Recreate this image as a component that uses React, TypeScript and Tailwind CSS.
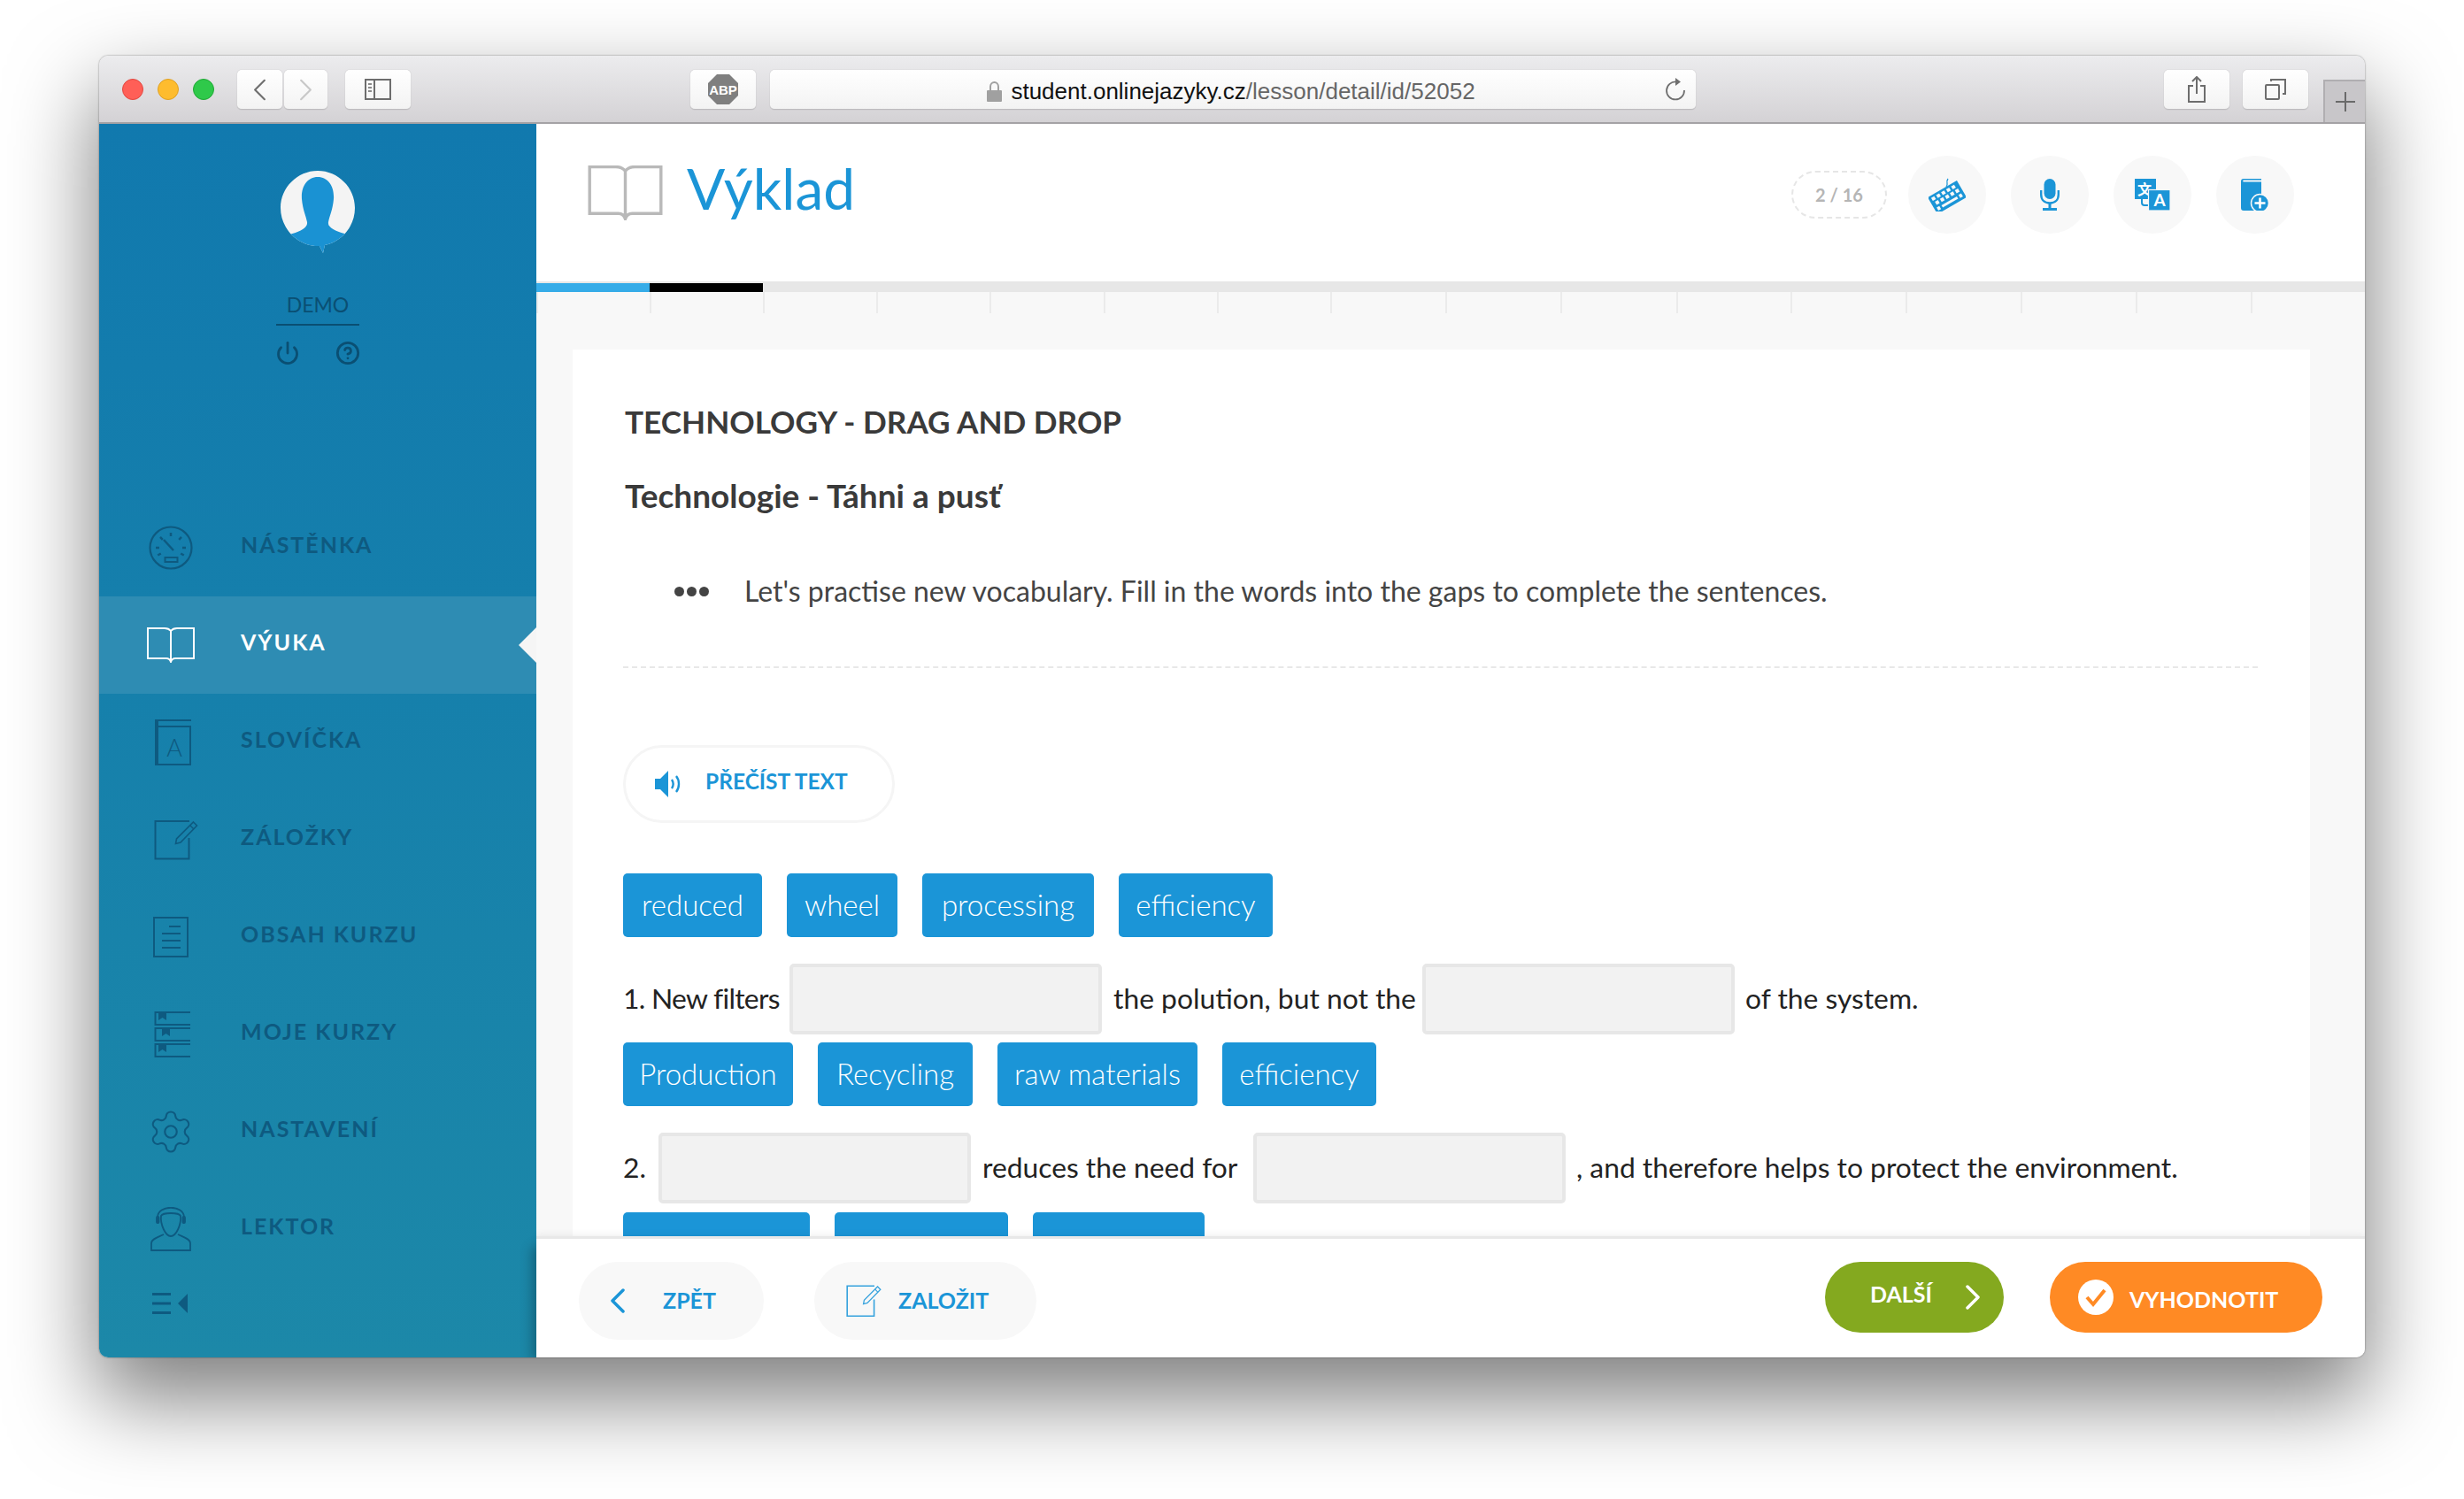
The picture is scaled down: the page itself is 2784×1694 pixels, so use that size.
import React from "react";
import { Settings, Power, CircleHelp } from "lucide-react";

const DK = "#0e5a80";
const BL = "#1b95d7";

function OpenBook({ w, h, color, sw }: { w: number; h: number; color: string; sw: number }) {
  return (
    <svg width={w} height={h} viewBox="0 0 54 40" fill="none" stroke={color} strokeWidth={sw}>
      <path d="M27 4C25 1.500 22 1 20 1H1V35H22C24 35 26 36 27 39C28 36 30 35 32 35H53V1H34C32 1 29 1.500 27 4ZM27 4V37" />
    </svg>
  );
}
function Gauge() {
  const ticks = [-120, -90, -45, 0, 45, 90, 120];
  return (
    <svg width="50" height="50" viewBox="0 0 50 50" fill="none" stroke={DK}>
      <circle cx="25" cy="25" r="23.500" strokeWidth="2.200" />
      {ticks.map((a) => (
        <line key={a} x1="25" y1="8" x2="25" y2="12" strokeWidth="2.500" transform={`rotate(${a} 25 25)`} />
      ))}
      <path d="M17 16L28 28" strokeWidth="2.500" />
      <rect x="18.500" y="36" width="14" height="5" strokeWidth="2" />
    </svg>
  );
}
function ABook() {
  return (
    <svg className="ml-[6px]" width="42" height="52" viewBox="0 0 42 52" fill="none" stroke={DK}>
      <path d="M41 1H1V51H40V8H3" strokeWidth="2" />
      <path d="M2 1V51" strokeWidth="4" />
      <text x="22" y="42" fill={DK} stroke="none" textAnchor="middle" fontSize="27" fontFamily="Lato, sans-serif" fontWeight="300">A</text>
    </svg>
  );
}
function Note({ w = 50, h = 46, color = DK, sw = 2, className = "" }: { w?: number; h?: number; color?: string; sw?: number; className?: string }) {
  return (
    <svg className={className} width={w} height={h} viewBox="0 0 50 46" fill="none" stroke={color} strokeWidth={sw}>
      <path d="M40 2H1.500V44.500H39.500V21" />
      <path d="M44.500 3L48.500 7L30 26L24.500 27.500L25.500 22Z" strokeWidth={sw * 0.8} />
      <path d="M41 7L45 11" strokeWidth={sw * 0.7} />
    </svg>
  );
}
function Doc() {
  return (
    <svg width="40" height="46" viewBox="0 0 40 46" fill="none" stroke={DK} strokeWidth="2">
      <rect x="1" y="1" width="38" height="44" />
      <path d="M18 11H31M10 19H31M10 27H31M10 35H31" />
    </svg>
  );
}
function Shelves() {
  const shelf = (y: number, bx: number) => (
    <g key={y}>
      <path d={`M41 ${y + 1}H1.500V${y + 15}H41`} strokeWidth="2" fill="none" stroke={DK} />
      <path d={`M${bx} ${y + 1}H${bx + 9}V${y + 10}L${bx + 4.500} ${y + 7}L${bx} ${y + 10}Z`} fill={DK} stroke="none" />
    </g>
  );
  return (
    <svg className="ml-[2px]" width="41" height="52" viewBox="0 0 41 52">
      {shelf(0, 5)}
      {shelf(18, 9)}
      {shelf(36, 5)}
    </svg>
  );
}
function Lektor() {
  return (
    <svg width="46" height="50" viewBox="0 0 46 50" fill="none" stroke={DK} strokeWidth="1.800">
      <path d="M15 31C9 34 1 36 1 41V49H45V41C45 36 37 34 31 31" />
      <path d="M12 10C14 6 32 6 34 10C35 20 29 33 23 33C17 33 11 20 12 10Z" />
      <path d="M8 12C8 -3 38 -3 38 12" />
      <rect x="7" y="11" width="2.500" height="7" rx="1" fill={DK} />
      <rect x="36.500" y="11" width="2.500" height="7" rx="1" fill={DK} />
    </svg>
  );
}
function Avatar() {
  return (
    <svg width="84" height="94" viewBox="0 0 84 94">
      <defs>
        <clipPath id="av"><path d="M42 0C65 0 84 19 84 42C84 62 70 80 50 84L48 93L44 85L42 85C19 85 0 65 0 42C0 19 19 0 42 0Z" /></clipPath>
      </defs>
      <g clipPath="url(#av)">
        <rect width="84" height="94" fill="#f4f4f4" />
        <path d="M42 7C54 7 61 18 60 32C59 44 55 52 54 58C53 65 64 69 76 72L70 94H14L10 72C21 69 31 65 30 58C29 52 25 44 24 32C23 18 30 7 42 7Z" fill="#1a92d3" />
      </g>
    </svg>
  );
}
function Keyboard() {
  const cols = [5, 11.500, 18, 24.500, 31];
  return (
    <svg width="42" height="38" viewBox="0 0 42 38">
      <path d="M20 10C23 7 19 5 22 1" stroke={BL} strokeWidth="1.300" fill="none" />
      <g transform="rotate(-30 21 22)">
        <rect x="2" y="11" width="38" height="22" fill={BL} />
        {cols.map((x) => <rect key={`a${x}`} x={x} y="13.500" width="4" height="4" fill="#f8f8f8" />)}
        {cols.map((x) => <rect key={`b${x}`} x={x + 1.500} y="19.500" width="4" height="4" fill="#f8f8f8" />)}
        <rect x="5" y="26" width="3.500" height="4" fill="#f8f8f8" />
        <rect x="11" y="26.500" width="20" height="3" fill="#f8f8f8" />
        <rect x="33.500" y="26" width="3.500" height="4" fill="#f8f8f8" />
      </g>
    </svg>
  );
}
function Mic() {
  return (
    <svg width="22" height="36" viewBox="0 0 22 36" fill="none">
      <rect x="4.500" y="0" width="13" height="23" rx="6.500" fill={BL} />
      <path d="M1.200 13V18C1.200 24 5 27.500 11 27.500C17 27.500 20.800 24 20.800 18V13" stroke={BL} strokeWidth="2.400" />
      <path d="M11 27V34" stroke={BL} strokeWidth="3" />
      <rect x="3" y="33" width="16" height="3" fill={BL} />
    </svg>
  );
}
function Translate() {
  return (
    <svg width="40" height="36" viewBox="0 0 40 36">
      <rect x="0" y="0" width="24" height="23" fill={BL} />
      <text x="11" y="18" fontSize="16" fontWeight="700" textAnchor="middle" fill="#fff" fontFamily="'Noto Sans CJK SC', sans-serif">文</text>
      <path d="M8 23V27C8 29 9 30 11 30H16" fill="none" stroke={BL} strokeWidth="2" />
      <rect x="15.500" y="12.500" width="24.500" height="23.500" fill={BL} stroke="#f8f8f8" strokeWidth="1.200" />
      <text x="28" y="31" fontSize="19" fontWeight="700" textAnchor="middle" fill="#fff" fontFamily="Lato, sans-serif">A</text>
    </svg>
  );
}
function BookAdd() {
  return (
    <svg width="32" height="36" viewBox="0 0 32 36">
      <path d="M0 3C0 1 1 0 3 0H23V1.500H3C2 1.500 2 3.500 3 3.500H23V36H3C1 36 0 35 0 33Z" fill={BL} />
      <circle cx="21.500" cy="27.500" r="10" fill={BL} stroke="#f8f8f8" strokeWidth="1.500" />
      <path d="M15.500 27.500H27.500M21.500 21.500V33.500" stroke="#fff" strokeWidth="2.600" />
    </svg>
  );
}
function Speaker() {
  return (
    <svg width="32" height="30" viewBox="0 0 32 30" fill="none">
      <path d="M0 9H6L15 0V30L6 21H0Z" fill={BL} />
      <path d="M19 10C21 13 21 17 19 20" stroke={BL} strokeWidth="2.400" />
      <path d="M24 6C28 11 28 19 24 24" stroke={BL} strokeWidth="2.400" />
    </svg>
  );
}
function Chev({ dir, color, w, h, sw }: { dir: "l" | "r"; color: string; w: number; h: number; sw: number }) {
  return (
    <svg width={w} height={h} viewBox="0 0 16 28" fill="none" stroke={color} strokeWidth={sw} strokeLinecap="round" strokeLinejoin="round">
      <path d={dir === "l" ? "M14 2L2 14L14 26" : "M2 2L14 14L2 26"} />
    </svg>
  );
}

function ToolBtn({ className, children }: { className: string; children?: React.ReactNode }) {
  return (
    <div className={`h-[45px] rounded-[5px] bg-gradient-to-b from-[#ffffff] to-[#f3f3f3] border-b border-[#bdbbbe] shadow-[0_0_1px_rgba(0,0,0,0.3)] flex items-center justify-center ${className}`}>
      {children}
    </div>
  );
}

const NAV: { label: string; icon: React.ReactNode; active?: boolean }[] = [
  { label: "NÁSTĚNKA", icon: <Gauge /> },
  { label: "VÝUKA", icon: <OpenBook w={54} h={40} color="#ffffff" sw={2} />, active: true },
  { label: "SLOVÍČKA", icon: <ABook /> },
  { label: "ZÁLOŽKY", icon: <Note className="ml-[11px]" /> },
  { label: "OBSAH KURZU", icon: <Doc /> },
  { label: "MOJE KURZY", icon: <Shelves /> },
  { label: "NASTAVENÍ", icon: <Settings size={54} strokeWidth={0.95} color={DK} /> },
  { label: "LEKTOR", icon: <Lektor /> },
];

const TICKS = [
  "w-[128px]", "w-[128px]", "w-[128px]", "w-[128px]", "w-[129px]", "w-[128px]", "w-[128px]", "w-[130px]",
  "w-[130px]", "w-[131px]", "w-[129px]", "w-[130px]", "w-[130px]", "w-[130px]", "w-[130px]", "flex-1",
];

function Chip({ text, className }: { text: string; className: string }) {
  return (
    <div className={`h-[72px] shrink-0 rounded-[5px] bg-[#1b95d7] text-white text-[33px] font-light flex items-center justify-center ${className}`}>
      <span className="-mt-[1px]">{text}</span>
    </div>
  );
}
function Gap() {
  return <div className="h-[80px] w-[353px] shrink-0 rounded-[5px] border-[4px] border-[#e7e7e7] bg-[#f2f2f2]" />;
}

export default function App() {
  return (
    <div className="w-[2784px] h-[1694px] overflow-hidden bg-white pl-[112px] pt-[63px] font-['Lato',sans-serif]">
      <div className="w-[2560px] h-[1471px] rounded-[10px] overflow-hidden flex flex-col bg-white shadow-[0_44px_96px_4px_rgba(0,0,0,0.5),0_0_2px_rgba(0,0,0,0.5)]">
        {/* Browser toolbar */}
        <div className="h-[77px] shrink-0 bg-gradient-to-b from-[#ececee] to-[#d4d2d5] border-b-[2px] border-[#a4a2a5] flex items-start pl-[26px] relative">
          <div className="flex gap-[16px] mt-[26px]">
            <div className="w-[24px] h-[24px] rounded-full bg-[#ff5f57] border border-[#e2463f]" />
            <div className="w-[24px] h-[24px] rounded-full bg-[#febc2e] border border-[#dfa023]" />
            <div className="w-[24px] h-[24px] rounded-full bg-[#2fc94a] border border-[#1fa834]" />
          </div>
          <div className="flex mt-[16px] ml-[26px] gap-[2px]">
            <ToolBtn className="w-[51px]"><Chev dir="l" color="#6f6f6f" w={15} h={25} sw={2.400} /></ToolBtn>
            <ToolBtn className="w-[49px]"><Chev dir="r" color="#c8c8c8" w={15} h={25} sw={2.400} /></ToolBtn>
          </div>
          <ToolBtn className="w-[74px] mt-[16px] ml-[20px]">
            <svg width="30" height="24" viewBox="0 0 30 24" fill="none" stroke="#6d6d6d" strokeWidth="2">
              <rect x="1" y="1" width="28" height="22" />
              <path d="M11 1V23" />
              <path d="M4 6H8M4 10H8M4 14H8" stroke="#8a8a8a" />
            </svg>
          </ToolBtn>
          <ToolBtn className="w-[74px] mt-[16px] ml-[316px]">
            <svg width="34" height="34" viewBox="0 0 34 34">
              <path d="M10 0H24L34 10V24L24 34H10L0 24V10Z" fill="#7f7f7f" />
              <text x="17" y="22.500" textAnchor="middle" fontSize="15" fontWeight="700" fill="#fff" fontFamily="'Liberation Sans', sans-serif">ABP</text>
            </svg>
          </ToolBtn>
          <ToolBtn className="w-[1046px] mt-[16px] ml-[16px] relative">
            <div className="flex items-center gap-[10px] font-['Liberation_Sans',sans-serif] text-[26px] -ml-[4px] pt-[4px]">
              <svg width="17" height="23" viewBox="0 0 17 23">
                <path d="M4 10V6C4 3 6 1 8.500 1C11 1 13 3 13 6V10" fill="none" stroke="#a0a0a0" strokeWidth="2" />
                <rect x="0" y="10" width="17" height="13" rx="1" fill="#a0a0a0" />
              </svg>
              <span className="text-[#111]">student.onlinejazyky.cz<span className="text-[#666]">/lesson/detail/id/52052</span></span>
            </div>
            <svg className="absolute right-[11px] top-[9px]" width="24" height="26" viewBox="0 0 24 26" fill="none" stroke="#6f6f6f" strokeWidth="1.800">
              <path d="M13 4.500A10 10 0 1 0 22 14" />
              <path d="M12 0L18 4.500L12 9Z" fill="#6f6f6f" stroke="none" />
            </svg>
          </ToolBtn>
          <ToolBtn className="w-[74px] mt-[16px] ml-[529px]">
            <svg width="22" height="30" viewBox="0 0 22 30" fill="none" stroke="#6d6d6d" strokeWidth="2">
              <path d="M7 11H2V29H20V11H15" />
              <path d="M11 20V2M6 6L11 1L16 6" />
            </svg>
          </ToolBtn>
          <ToolBtn className="w-[74px] mt-[16px] ml-[15px]">
            <svg width="24" height="24" viewBox="0 0 24 24" fill="none" stroke="#6d6d6d" strokeWidth="2">
              <rect x="1" y="7" width="15" height="16" rx="1" />
              <path d="M7 3V1H23V17H20" />
            </svg>
          </ToolBtn>
          <div className="absolute right-0 bottom-0 w-[47px] h-[48px] border-l-[2px] border-t-[2px] border-[#b0aeb1] bg-[#c8c6c9] flex items-center justify-center">
            <svg width="22" height="22" viewBox="0 0 22 22" stroke="#6a6a6a" strokeWidth="2"><path d="M11 0V22M0 11H22" /></svg>
          </div>
        </div>

        <div className="flex-1 flex min-h-0">
          {/* Sidebar */}
          <aside className="w-[494px] shrink-0 bg-gradient-to-b from-[#1179ae] to-[#1c88a8] flex flex-col">
            <div className="h-[424px] shrink-0 flex flex-col items-center pt-[53px]">
              <Avatar />
              <div className="mt-[41px] w-[94px] text-center text-[23px] leading-[32px] text-[#0a4f73] border-b-[2px] border-[#0a4f73] pb-[6px]">DEMO</div>
              <div className="mt-[17px] flex gap-[40px]">
                <Power size={28} strokeWidth={2.400} color="#0a4f73" />
                <CircleHelp size={28} strokeWidth={2.400} color="#0a4f73" />
              </div>
            </div>
            <nav className="flex flex-col">
              {NAV.map((n) => (
                <div key={n.label} className={`h-[110px] flex items-center relative pl-[45px] ${n.active ? "bg-[#2e8cb3]" : ""}`}>
                  <div className="w-[72px] flex justify-center shrink-0">{n.icon}</div>
                  <span className={`ml-[43px] -mt-[6px] text-[25px] font-bold tracking-[2px] ${n.active ? "text-white" : "text-[#0e5a80]"}`}>{n.label}</span>
                  {n.active && <div className="absolute right-0 top-[35px] w-0 h-0 border-y-[20px] border-y-transparent border-r-[20px] border-r-[#f5f5f5]" />}
                </div>
              ))}
            </nav>
            <div className="pl-[60px] pt-[17px]">
              <svg width="42" height="24" viewBox="0 0 42 24" fill={DK}>
                <rect x="0" y="0" width="21" height="3" />
                <rect x="0" y="10.500" width="21" height="3" />
                <rect x="0" y="21" width="21" height="3" />
                <path d="M40 1V23L29 12Z" />
              </svg>
            </div>
          </aside>

          {/* Main */}
          <main className="flex-1 min-w-0 flex flex-col">
            <header className="h-[178px] shrink-0 bg-white flex items-start pl-[58px]">
              <div className="mt-[47px]"><OpenBook w={85} h={62} color="#b9b9b9" sw={2.200} /></div>
              <h1 className="ml-[27px] mt-[35px] text-[64px] leading-[76px] font-normal text-[#1b95d7]">Výklad</h1>
              <div className="ml-auto mr-[80px] mt-[36px] flex items-center gap-[28px]">
                <div className="w-[108px] h-[54px] -mr-[4px] rounded-full border-[2px] border-dashed border-[#e6e6e6] flex items-center justify-center text-[20px] font-bold text-[#b5b5b5]">2 / 16</div>
                <div className="w-[88px] h-[88px] rounded-full bg-[#f8f8f8] flex items-center justify-center"><Keyboard /></div>
                <div className="w-[88px] h-[88px] rounded-full bg-[#f8f8f8] flex items-center justify-center"><Mic /></div>
                <div className="w-[88px] h-[88px] rounded-full bg-[#f8f8f8] flex items-center justify-center"><Translate /></div>
                <div className="w-[88px] h-[88px] rounded-full bg-[#f8f8f8] flex items-center justify-center"><BookAdd /></div>
              </div>
            </header>
            <div className="h-[12px] shrink-0 bg-[#e7e7e7] pt-[2px] flex">
              <div className="w-[128px] bg-[#36ace8]" />
              <div className="w-[128px] bg-black" />
            </div>
            <div className="flex-1 min-h-0 bg-[#f8f8f8] overflow-hidden">
              <div className="h-[24px] flex">
                {TICKS.map((t, i) => <div key={i} className={`border-l-[2px] border-[#ebebeb] ${t}`} />)}
              </div>
              <div className="ml-[41px] mr-[62px] mt-[41px] bg-white px-[57px] pt-[61px] h-[1200px] text-[#222]">
                <h2 className="h-[40px] leading-[40px] ml-[2px] text-[35.200px] font-bold text-[#3a3a3a]">TECHNOLOGY - DRAG AND DROP</h2>
                <h3 className="mt-[44px] h-[40px] leading-[40px] ml-[2px] text-[37px] font-bold text-[#3a3a3a]">Technologie - Táhni a pusť</h3>
                <div className="mt-[68px] h-[40px] flex items-center text-[32px] text-[#444] font-normal">
                  <div className="ml-[58px] flex gap-[3px]">
                    <span className="w-[11px] h-[11px] rounded-full bg-[#444]" />
                    <span className="w-[11px] h-[11px] rounded-full bg-[#444]" />
                    <span className="w-[11px] h-[11px] rounded-full bg-[#444]" />
                  </div>
                  <span className="ml-[40px]">Let's practise new vocabulary. Fill in the words into the gaps to complete the sentences.</span>
                </div>
                <div className="mt-[65px] border-t-[2px] border-dashed border-[#e8e8e8] w-[1847px]" />
                <div className="mt-[87px] w-[307px] h-[88px] rounded-full border-[3px] border-[#f5f5f5] flex items-center pl-[33px] gap-[25px]">
                  <Speaker />
                  <span className="text-[24.500px] font-bold text-[#1b95d7] -mt-[5px]">PŘEČÍST TEXT</span>
                </div>

                <div className="mt-[57px] flex gap-[28px]">
                  <Chip text="reduced" className="w-[157px]" />
                  <Chip text="wheel" className="w-[125px]" />
                  <Chip text="processing" className="w-[194px]" />
                  <Chip text="efficiency" className="w-[174px]" />
                </div>
                <div className="mt-[30px] flex items-center text-[31.800px] text-[#222] whitespace-nowrap">
                  <span className="w-[188px] -mt-[1px] tracking-[-0.7px]">1. New filters</span>
                  <Gap />
                  <span className="ml-[13px] w-[349px] -mt-[1px]">the polution, but not the</span>
                  <Gap />
                  <span className="ml-[12px] -mt-[1px]">of the system.</span>
                </div>
                <div className="mt-[9px] flex gap-[28px]">
                  <Chip text="Production" className="w-[192px]" />
                  <Chip text="Recycling" className="w-[175px]" />
                  <Chip text="raw materials" className="w-[226px]" />
                  <Chip text="efficiency" className="w-[174px]" />
                </div>
                <div className="mt-[30px] flex items-center text-[31.800px] text-[#222] whitespace-nowrap">
                  <span className="w-[40px] -mt-[1px]">2.</span>
                  <Gap />
                  <span className="ml-[13px] w-[306px] -mt-[1px]">reduces the need for</span>
                  <Gap />
                  <span className="ml-[12px] -mt-[1px]">, and therefore helps to protect the environment.</span>
                </div>
                <div className="mt-[10px] flex gap-[28px]">
                  <Chip text="" className="w-[211px]" />
                  <Chip text="" className="w-[196px]" />
                  <Chip text="" className="w-[194px]" />
                </div>
              </div>
            </div>
            <footer className="h-[137px] shrink-0 relative z-10 bg-white border-t-[3px] border-[#e8e8e8] shadow-[-10px_8px_12px_-4px_rgba(0,0,0,0.22),0_-2px_8px_rgba(0,0,0,0.06)] flex items-start pl-[48px] pr-[48px] pt-[26px]">
              <div className="w-[209px] h-[88px] rounded-full bg-[#f8f8f8] flex items-center pl-[36px] gap-[43px]">
                <Chev dir="l" color="#1b95d7" w={16} h={28} sw={3.500} />
                <span className="text-[25px] font-bold text-[#1b95d7]">ZPĚT</span>
              </div>
              <div className="ml-[57px] w-[251px] h-[88px] rounded-full bg-[#f8f8f8] flex items-center pl-[36px] gap-[19px]">
                <Note w={40} h={38} color="#36a2dd" sw={2} />
                <span className="text-[25px] font-bold text-[#1b95d7]">ZALOŽIT</span>
              </div>
              <div className="ml-auto w-[202px] h-[80px] rounded-full bg-[#84a91f] flex items-center pl-[51px] gap-[38px] text-white">
                <span className="text-[25px] font-bold -mt-[6px]">DALŠÍ</span>
                <Chev dir="r" color="#ffffff" w={16} h={28} sw={3.500} />
              </div>
              <div className="ml-[52px] w-[308px] h-[80px] rounded-full bg-[#ff8a24] flex items-center pl-[32px] gap-[18px] text-white">
                <svg width="40" height="40" viewBox="0 0 40 40">
                  <circle cx="20" cy="20" r="20" fill="#fff" />
                  <path d="M10 20L17 28L30 12" fill="none" stroke="#ff8a24" strokeWidth="4" />
                </svg>
                <span className="text-[25px] font-bold mt-[6px]">VYHODNOTIT</span>
              </div>
            </footer>
          </main>
        </div>
      </div>
    </div>
  );
}
